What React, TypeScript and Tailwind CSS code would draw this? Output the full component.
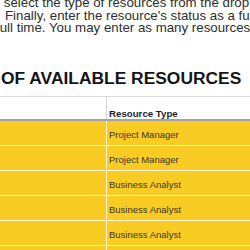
const rows = [
  "Project Manager",
  "Project Manager",
  "Business Analyst",
  "Business Analyst",
  "Business Analyst",
  "",
];

export default function App() {
  return (
    <div className="flex flex-col w-[250px] h-[250px] overflow-hidden bg-white font-['Liberation_Sans',Arial,sans-serif]">
      {/* Intro text, cut at the left edge */}
      <div className="shrink-0 -mt-[3px] text-[13.3px] leading-[12.5px] text-[#2e2e2e] whitespace-nowrap">
        <div className="-ml-[11px]">to select the type of resources from the drop-down menu.</div>
        <div className="ml-[5px]">Finally, enter the resource's status as a full time</div>
        <div className="-ml-[4px]">full time. You may enter as many resources as needed.</div>
      </div>

      {/* Section heading */}
      <div className="shrink-0 pt-[35px] pl-[1px] text-[17.4px] leading-[17px] font-bold text-[#141414] whitespace-nowrap">
        OF AVAILABLE RESOURCES
      </div>

      {/* Resources table */}
      <div className="shrink-0 mt-[9px] w-[300px] border-t border-[#dadada]">
        <div className="flex h-[24px] border-b-2 border-[#a3a3a3] bg-white">
          <div className="w-[107px] shrink-0 border-r border-[#d6d6d6]" />
          <div className="flex items-end pl-[2px] text-[9.7px] leading-[11px] font-bold text-[#1e1e1e]">
            Resource Type
          </div>
        </div>
        {rows.map((type, i) => (
          <div key={i} className="flex h-[25px] border-b border-[#fff6d8] bg-[#f9cc24]">
            <div className="w-[107px] shrink-0 border-r border-[#fff6d8]" />
            <div className="flex items-center pt-[3px] pl-[2px] text-[9.5px] leading-[11px] text-[#3a3424] whitespace-nowrap">
              {type}
            </div>
          </div>
        ))}
      </div>
    </div>
  );
}
